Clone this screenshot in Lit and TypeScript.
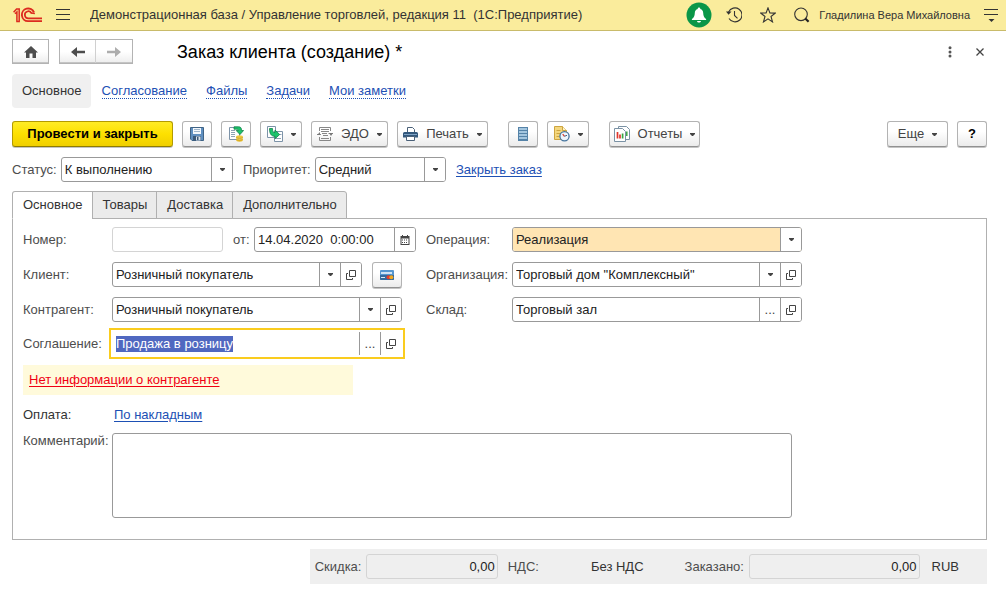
import { LitElement, html, svg, css, nothing, TemplateResult, SVGTemplateResult } from "lit";
import { customElement, property, query } from "lit/decorators.js";
import { classMap } from "lit/directives/class-map.js";

/* ---------- icons ---------- */

interface Icon {
  w: number;
  h: number;
  body: SVGTemplateResult;
}

const icons: Record<string, Icon> = {
  logo: {
    w: 30,
    h: 16,
    body: svg`<g fill="none" stroke="#dc2a1f">
      <path stroke-width="1.5" d="M0.6 5.200 3.600 1.900H6.200V14.600M2 6.800 3.900 5V14.600M3.200 14.400H6.900"/>
      <path stroke-width="1.900" d="M21 5.400A6.300 6.300 0 1 0 15 14.100H29"/>
      <path stroke-width="1.700" d="M18.500 6.300A3.500 3.500 0 1 0 15.300 11.300H29"/>
      <path stroke-width="1.500" d="M18 6 21.900 6.500"/>
    </g>`,
  },
  burger: {
    w: 14,
    h: 12,
    body: svg`<path stroke="#333" d="M0 0.5H14M0 5.5H14M0 10.5H14"/>`,
  },
  bell: {
    w: 26,
    h: 26,
    body: svg`<circle cx="13" cy="13" r="12.5" fill="#0a9648"/>
      <path fill="#fff" d="M13 5.6c.8 0 1.3.6 1.3 1.3 1.9.6 2.8 2 2.9 4 .1 2.700.9 4.600 2.900 6.100v1H5.900v-1c2-1.500 2.800-3.400 2.900-6.100.1-2 1-3.400 2.900-4 0-.7.5-1.300 1.300-1.300zM11 19h4c-.2 1-1 1.500-2 1.500s-1.800-.5-2-1.500z"/>`,
  },
  history: {
    w: 16,
    h: 16,
    body: svg`<g fill="none" stroke="#333" stroke-width="1.1"><path d="M2.600 5A7 7 0 1 1 3 11.500M8.500 4v4.500l3 2.800"/></g>
      <path fill="#333" d="M0 4.500h5.500L2.600 7.800z"/>`,
  },
  star: {
    w: 16,
    h: 16,
    body: svg`<path fill="none" stroke="#333" stroke-width="1.1" d="M8 .9 9.900 5.900 15.200 6.100 11 9.500 12.500 14.900 8 11.800 3.500 14.900 5 9.500.8 6.100 6.100 5.900z"/>`,
  },
  search: {
    w: 16,
    h: 16,
    body: svg`<circle cx="7" cy="7.300" r="6.300" fill="none" stroke="#333" stroke-width="1.1"/><path stroke="#222" stroke-width="2.200" d="M11.300 11.500 14.600 14.700"/>`,
  },
  service: {
    w: 14,
    h: 14,
    body: svg`<path stroke="#333" d="M0 1.500H14M0 6.500H14"/><path fill="#333" d="M4.500 11h6l-3 3z"/>`,
  },
  home: {
    w: 14,
    h: 12,
    body: svg`<path fill="#4d4d4d" d="M7 0 14 6.500H12V12H8.500V7.500H5.500V12H2V6.500H0z"/>`,
  },
  back: {
    w: 14,
    h: 12,
    body: svg`<path fill="#4d4d4d" d="M0 6 6 1V4.700H14V7.300H6V11z"/>`,
  },
  forward: {
    w: 14,
    h: 12,
    body: svg`<path fill="#adadad" d="M14 6 8 1V4.700H0V7.300H8V11z"/>`,
  },
  dots: {
    w: 4,
    h: 12,
    body: svg`<g fill="#555"><circle cx="2" cy="1.700" r="1.500"/><circle cx="2" cy="5.900" r="1.500"/><circle cx="2" cy="10.100" r="1.500"/></g>`,
  },
  close: {
    w: 8,
    h: 8,
    body: svg`<path stroke="#444" stroke-width="1.300" d="M.5.5 7.500 7.500M7.500.5.5 7.500"/>`,
  },
  arrow: {
    w: 5,
    h: 3,
    body: svg`<path fill="#444" d="M0 0H5V1L3 3H2L0 1z"/>`,
  },
  save: {
    w: 14,
    h: 14,
    body: svg`<path fill="#5f8fc0" stroke="#3f6385" d="M.5.5H13.500V13.500H2L.5 12z"/>
      <path fill="#f4f8fc" d="M3 1h8v6H3z"/><path stroke="#9fb6cc" d="M4 2.500h6M4 4.500h6"/>
      <path fill="#3a5878" d="M3 9h8v4.500H3z"/><path fill="#d9e3ec" d="M6 9.500h4.500v4H6z"/><path fill="#3a5878" d="M7 10h1.500v3H7z"/>`,
  },
  post: {
    w: 16,
    h: 16,
    body: svg`<path fill="#fff" stroke="#7d93a8" d="M1.500 1.500H11.500V13.500H1.500z"/><path stroke="#8ea3b5" d="M3 4.500h4M3 6.500h4M3 8.500h4M3 10.500h4"/>
      <path fill="#1cc36b" stroke="#12804a" stroke-width=".8" d="M6 .8h4.500C12.800.8 13.500 2 13.500 4.500H15.600L12 8.500 8.200 4.500H10.500C10.500 3.300 10 3.200 6 3.200z"/>
      <ellipse cx="11.500" cy="14" rx="3.400" ry="1.700" fill="#e9bd2c"/><ellipse cx="11.500" cy="12.300" rx="3.400" ry="1.600" fill="#f3d765"/><ellipse cx="11.500" cy="10.700" rx="3.400" ry="1.500" fill="#eec63d"/>
      <path stroke="#b98f1a" stroke-width=".6" fill="none" d="M8.100 11.300c1.500 1.500 5.300 1.500 6.800 0M8.100 13c1.500 1.500 5.300 1.500 6.800 0"/>`,
  },
  basis: {
    w: 16,
    h: 16,
    body: svg`<path fill="#fff" stroke="#7d93a8" d="M.5.500H8.500V11.500H.500z"/><path fill="#fff" stroke="#7d93a8" d="M7.500 5.500H15.500V15.500H7.500z"/><path stroke="#8ea3b5" d="M9 12.500h5M12.500 8.500h2"/>
      <path fill="#1cc36b" stroke="#12804a" stroke-width=".8" d="M2.500 2.500H5.500C5.500 5.500 6 6.500 8 6.500V4L12.700 8.500 8 12.800V10.300C4 10.300 2.500 7.500 2.500 2.500z"/>`,
  },
  edo: {
    w: 16,
    h: 14,
    body: svg`<g fill="none" stroke="#888"><path d="M2.500 4V.500H13.500V4M2.500 10V13.500H13.500V10"/><path d="M4 2.500h8M4 4.500h8M5 6.500h5M6 8.500h5M4 11.500h8"/><path d="M0 7.500H4M11.500 6.500H16"/></g>
      <path fill="#777" d="M0 8 3 5V8zM16 6H12L14 9z"/>`,
  },
  print: {
    w: 15,
    h: 14,
    body: svg`<path fill="#fff" stroke="#4a6078" d="M4.500.500h5l2 2V5.500h-7z"/><path fill="#33587c" d="M1.500 5h12A1.500 1.500 0 0 1 15 6.500V10.500H0V6.500A1.500 1.500 0 0 1 1.500 5z"/>
      <path stroke="#7fa3c4" d="M1 7.500H14"/><path fill="#fff" stroke="#4a6078" d="M3.500 9.500h8v4h-8z"/>`,
  },
  list: {
    w: 10,
    h: 14,
    body: svg`<path fill="#5583a8" d="M0 0H10V14H0z"/><path stroke="#a4c6df" stroke-width="2" d="M1 2H9M1 5H9M1 8H9M1 11H9"/>`,
  },
  note: {
    w: 16,
    h: 16,
    body: svg`<path fill="#f4d77e" stroke="#cda440" d="M.500.500H8.500L12.500 4.500V13.500H.500z"/><path fill="#fff3c8" stroke="#cda440" d="M8.500.500V4.500H12.500"/><path stroke="#cda440" d="M2.500 4.500h4M2.500 7.500h5M2.500 10.500h3"/>
      <circle cx="10.500" cy="10.300" r="4.600" fill="#eef5fc" stroke="#46759e" stroke-width="1.300"/><path fill="none" stroke="#d8402f" stroke-width="1.300" d="M10.500 10.300 8.700 8.200"/><path fill="none" stroke="#3d607f" d="M10.500 10.300 13 9.300"/>`,
  },
  report: {
    w: 16,
    h: 16,
    body: svg`<path fill="#fff" stroke="#7b92a5" d="M4.500.500H12.500L15.500 3.500V13.500H4.500z"/><path stroke="#3ba544" stroke-width="1.500" d="M12.800 5.500V10"/>
      <path fill="#fff" stroke="#7b92a5" d="M.500 2.500H8.500L11.500 5.500V15.500H.500z"/><path stroke="#e0352b" stroke-width="1.700" d="M3.500 6V12.500M6 8.500V12.500"/><path stroke="#3ba544" stroke-width="1.700" d="M8.600 7.500V12.500"/>`,
  },
  calendar: {
    w: 10,
    h: 10,
    body: svg`<path fill="#444" d="M2 0h1v1H7V0h1v1h1.500v9h-9V1H2z"/><path fill="#fff" d="M1.500 3.500h7V9h-7z"/><path stroke="#444" stroke-dasharray="1 1" d="M2 5H8M2 7.500H8"/>`,
  },
  open: {
    w: 10,
    h: 10,
    body: svg`<path fill="none" stroke="#444" d="M3.500.500H9.500V6.500H3.500zM2 3.500H.500V9.500H6.500V8"/>`,
  },
  card: {
    w: 14,
    h: 10,
    body: svg`<rect width="14" height="10" rx="1" fill="#5596cf"/><path fill="#cfe3f3" d="M1 2h11v2H1z"/><path fill="#356a9c" d="M0 5h14v4a1 1 0 0 1-1 1H1A1 1 0 0 1 0 9z"/><path stroke="#dce9f4" d="M1 7.500h4"/><circle cx="8.500" cy="7.300" r="2" fill="#e43d2c"/><circle cx="11.300" cy="7.300" r="2" fill="#f2a71f"/>`,
  },
};

const icon = (name: string): TemplateResult => {
  const i = icons[name];
  return html`<svg width=${i.w} height=${i.h} viewBox="0 0 ${i.w} ${i.h}" aria-hidden="true">${i.body}</svg>`;
};

const base = css`
  * {
    box-sizing: border-box;
  }
  svg {
    display: block;
    flex: none;
  }
  button,
  input,
  select,
  textarea {
    font: inherit;
    color: inherit;
    margin: 0;
    padding: 0;
    border: 0;
    background: none;
    outline: none;
    appearance: none;
    min-width: 0;
  }
  button {
    cursor: pointer;
  }
`;

/* ---------- command bar button ---------- */

@customElement("cmd-button")
class CmdButton extends LitElement {
  static styles = [
    base,
    css`
      :host {
        display: block;
        flex: none;
      }
      .btn {
        display: flex;
        align-items: center;
        justify-content: center;
        gap: 8px;
        width: 100%;
        height: 26px;
        padding: 0 7px;
        border: 1px solid #b3b3b3;
        border-bottom-color: #919191;
        border-radius: 3px;
        background: linear-gradient(#fff 40%, #ebebeb);
        box-shadow: 0 1px 0 #c4c4c4;
        color: #444;
        white-space: nowrap;
      }
      .main {
        border-color: #b39b00 #b39b00 #8f7c00;
        background: linear-gradient(#ffec26, #fde000 50%, #f0cf00);
        color: #000;
        font-weight: bold;
      }
      .dark {
        color: #000;
        font-weight: bold;
      }
    `,
  ];
  @property() icon = "";
  @property() text = "";
  @property() hint = "";
  @property() kind = "";
  @property({ type: Boolean }) menu = false;

  render() {
    return html`<button
      class=${classMap({ btn: true, main: this.kind === "main", dark: this.kind === "dark" })}
      aria-label=${this.text || this.hint}
    >
      ${this.icon ? icon(this.icon) : nothing}${this.text ? html`<span>${this.text}</span>` : nothing}${this.menu
        ? icon("arrow")
        : nothing}
    </button>`;
  }
}

/* ---------- input with side buttons ---------- */

@customElement("form-field")
class FormField extends LitElement {
  static styles = [
    base,
    css`
      :host {
        display: block;
        min-width: 0;
        color: #222;
      }
      .line {
        display: flex;
        align-items: center;
      }
      .label {
        flex: none;
        width: var(--label, auto);
        margin-right: var(--label-gap, 0);
        color: #4d4d4d;
        white-space: nowrap;
      }
      .box {
        display: flex;
        flex: 1;
        min-width: 0;
        height: 25px;
        border: 1px solid #999;
        border-radius: 3px;
        background: #fff;
        overflow: hidden;
      }
      .pale {
        border-color: #d4d4d4;
        background: transparent;
      }
      .marked .value {
        background: #ffe5b3;
      }
      .active {
        border-color: #fff;
        border-radius: 0;
        outline: 2px solid #facc1e;
        outline-offset: 1px;
      }
      .value {
        flex: 1;
        width: 0;
        padding: 0 3px;
      }
      .value::selection {
        background: #5068c0;
        color: #fff;
      }
      .number {
        text-align: right;
        padding: 0 2px;
      }
      .pick {
        display: grid;
        flex: 1;
        min-width: 0;
        grid-template-columns: 1fr 21px;
      }
      .pick .value {
        grid-area: 1 / 1 / 2 / 3;
        width: 100%;
      }
      .side {
        display: flex;
        flex: none;
        align-items: center;
        justify-content: center;
        width: 21px;
        border-left: 1px solid #999;
        background: #fff;
        color: #444;
      }
      .pick .side {
        grid-area: 1 / 2;
        pointer-events: none;
      }
    `,
  ];
  @property() label = "";
  @property() value = "";
  @property() kind = "";
  @property() pick = "";
  @property({ type: Boolean }) open = false;
  @query("input") input?: HTMLInputElement;

  firstUpdated() {
    if (this.kind === "active") {
      this.input?.focus();
      this.input?.select();
    }
  }

  private control() {
    if (this.pick === "list") {
      return html`<div class="pick">
        <select class="value" id="f">
          <option>${this.value}</option>
        </select>
        <span class="side">${icon("arrow")}</span>
      </div>`;
    }
    return html`<input
        id="f"
        class=${classMap({ value: true, number: this.kind === "total" })}
        .value=${this.value}
        ?readonly=${this.kind === "total"}
      />${this.pick === "date"
        ? html`<button class="side" aria-label="Выбрать дату">${icon("calendar")}</button>`
        : this.pick === "more"
          ? html`<button class="side" aria-label="Выбрать">...</button>`
          : nothing}`;
  }

  render() {
    return html`<div class="line">
      <label class="label" for="f">${this.label}</label>
      <div
        class=${classMap({
          box: true,
          pale: this.kind === "total" || this.kind === "pale",
          marked: this.kind === "marked",
          active: this.kind === "active",
        })}
      >
        ${this.control()}
        ${this.open ? html`<button class="side" aria-label="Открыть">${icon("open")}</button>` : nothing}
      </div>
    </div>`;
  }
}

/* ---------- page ---------- */

@customElement("app-root")
class AppRoot extends LitElement {
  static styles = [
    base,
    css`
      :host {
        display: block;
        font: 13px/16px "Liberation Sans", Arial, sans-serif;
        color: #333;
        background: #fff;
      }
      a {
        color: #1d50b4;
        text-underline-offset: 2px;
      }
      .top {
        display: flex;
        align-items: center;
        height: 31px;
        padding: 0 8px 0 13px;
        background: #faec9c;
        border-bottom: 1px solid #c9bb6a;
      }
      .burger {
        margin: 0 20px 0 13px;
      }
      .base {
        flex: 1;
        min-width: 0;
        overflow: hidden;
        white-space: pre;
      }
      .tools {
        display: flex;
        align-items: center;
        gap: 18px;
        margin-right: 9px;
      }
      .bell {
        margin-right: -4px;
      }
      .user {
        margin-right: 14px;
        font-size: 11px;
        white-space: nowrap;
      }
      .page {
        padding: 8px 19px 9px 12px;
      }
      .head {
        display: flex;
        align-items: center;
      }
      .nav {
        display: flex;
        height: 25px;
        margin-right: 10px;
        border: 1px solid #b3b3b3;
        background: linear-gradient(#fff 50%, #ededed);
        box-shadow: inset 0 -1px 0 #c4c4c4;
      }
      .nav button {
        display: flex;
        align-items: center;
        justify-content: center;
        width: 35px;
      }
      .nav button + button {
        width: 37px;
        border-left: 1px solid #d0d0d0;
      }
      .title {
        flex: 1;
        margin: 0 0 0 34px;
        font-size: 18px;
        line-height: 22px;
        font-weight: normal;
        color: #000;
      }
      .window {
        display: flex;
        align-items: center;
        gap: 24px;
        padding-right: 3px;
      }
      .sections {
        display: flex;
        align-items: center;
        gap: 19px;
        margin: 10px 0 13px;
      }
      .section {
        text-decoration: none;
        border-bottom: 1px dotted #1d50b4;
        line-height: 15px;
      }
      .current {
        margin-right: -8px;
        padding: 9px 9px 9px 10px;
        border: 0;
        border-radius: 4px;
        background: #f0f0f0;
        color: #333;
        line-height: 16px;
      }
      .bar {
        display: flex;
        gap: 9px;
      }
      .push {
        margin-left: auto;
      }
      .apart {
        margin-left: 11px;
      }
      .w-main { width: 161px; }
      .w-s { width: 30px; }
      .w-m { width: 42px; }
      .w-edo { width: 77px; }
      .w-print { width: 91px; }
      .w-more { width: 61px; }
      .state {
        display: flex;
        align-items: center;
        gap: 10px;
        margin: 10px 0 9px;
        --label-gap: 4px;
      }
      .status { width: 221px; }
      .priority { width: 203px; }
      .tabs {
        display: flex;
        position: relative;
        margin-bottom: -1px;
      }
      .tab {
        height: 28px;
        padding: 0 9px 0 10px;
        margin-right: -1px;
        border: 1px solid #b0b0b0;
        background: #ebebeb;
        white-space: nowrap;
      }
      .tab:first-child {
        border-top-left-radius: 3px;
      }
      .tab:last-child {
        border-top-right-radius: 3px;
      }
      .on {
        background: #fff;
        border-bottom-color: #fff;
      }
      .panel {
        padding: 8px 10px 21px;
        border: 1px solid #b0b0b0;
      }
      .form {
        display: flex;
        gap: 10px;
      }
      .left,
      .right {
        display: flex;
        flex-direction: column;
        gap: 10px;
      }
      .left {
        flex: 0 1 393px;
        --label: 89px;
      }
      .right {
        flex: 0 1 376px;
        --label: 86px;
      }
      .row {
        display: flex;
        height: 25px;
      }
      .number {
        width: 200px;
        margin-right: 10px;
      }
      .date {
        flex: 1;
        --label: 21px;
      }
      .client {
        flex: 0 1 339px;
        margin-right: 10px;
      }
      .narrow {
        margin-right: 14px;
      }
      .agreement {
        margin: 9px 0;
        max-width: 379px;
        --label: 89px;
      }
      .warning {
        width: 330px;
        padding: 7px 6px;
        background: #fffadb;
      }
      .warning a {
        color: #f00014;
      }
      .payment {
        display: flex;
        margin: 12px 0 10px;
      }
      .payment span {
        width: 91px;
      }
      .comment {
        display: flex;
        max-width: 769px;
        color: #4d4d4d;
      }
      .comment label {
        flex: none;
        width: 89px;
      }
      .comment textarea {
        flex: 1;
        height: 85px;
        padding: 4px;
        border: 1px solid #999;
        border-radius: 3px;
        resize: none;
      }
      .totals {
        display: flex;
        align-items: center;
        width: fit-content;
        height: 35px;
        margin: 9px 0 0 auto;
        padding: 0 28px 0 5px;
        background: #efefef;
        --label-gap: 5px;
      }
      .discount { width: 183px; }
      .vat {
        margin: 0 52px 0 10px;
        color: #4d4d4d;
      }
      .ordered {
        width: 235px;
        margin: 0 12px 0 41px;
      }
    `,
  ];

  render() {
    return html`
      <header class="top">
        ${icon("logo")}
        <button class="burger" aria-label="Меню">${icon("burger")}</button>
        <span class="base">Демонстрационная база / Управление торговлей, редакция 11  (1С:Предприятие)</span>
        <div class="tools">
          <button class="bell" aria-label="Оповещения">${icon("bell")}</button>
          <button aria-label="История">${icon("history")}</button>
          <button aria-label="Избранное">${icon("star")}</button>
          <button aria-label="Поиск">${icon("search")}</button>
        </div>
        <span class="user">Гладилина Вера Михайловна</span>
        <button aria-label="Сервис">${icon("service")}</button>
      </header>
      <main class="page">
        <div class="head">
          <div class="nav"><button aria-label="Домой">${icon("home")}</button></div>
          <div class="nav">
            <button aria-label="Назад">${icon("back")}</button>
            <button aria-label="Вперед">${icon("forward")}</button>
          </div>
          <h1 class="title">Заказ клиента (создание) *</h1>
          <div class="window">
            <button aria-label="Еще действия">${icon("dots")}</button>
            <button aria-label="Закрыть">${icon("close")}</button>
          </div>
        </div>
        <nav class="sections">
          <a class="section current" href="#main">Основное</a>
          ${["Согласование", "Файлы", "Задачи", "Мои заметки"].map(
            (t) => html`<a class="section" href="#section">${t}</a>`,
          )}
        </nav>
        <div class="bar">
          <cmd-button class="w-main" kind="main" text="Провести и закрыть"></cmd-button>
          <cmd-button class="w-s" icon="save" hint="Записать"></cmd-button>
          <cmd-button class="w-s" icon="post" hint="Провести"></cmd-button>
          <cmd-button class="w-m" icon="basis" menu hint="Создать на основании"></cmd-button>
          <cmd-button class="w-edo" icon="edo" text="ЭДО" menu></cmd-button>
          <cmd-button class="w-print" icon="print" text="Печать" menu></cmd-button>
          <cmd-button class="w-s apart" icon="list" hint="Список"></cmd-button>
          <cmd-button class="w-m" icon="note" menu hint="Напоминание"></cmd-button>
          <cmd-button class="w-print apart" icon="report" text="Отчеты" menu></cmd-button>
          <cmd-button class="w-more push" text="Еще" menu></cmd-button>
          <cmd-button class="w-s" kind="dark" text="?"></cmd-button>
        </div>
        <div class="state">
          <form-field class="status" label="Статус:" value="К выполнению" pick="list"></form-field>
          <form-field class="priority" label="Приоритет:" value="Средний" pick="list"></form-field>
          <a href="#close">Закрыть заказ</a>
        </div>
        <div class="tabs" role="tablist">
          ${["Основное", "Товары", "Доставка", "Дополнительно"].map(
            (t, i) => html`<button role="tab" aria-selected=${i === 0} class=${classMap({ tab: true, on: i === 0 })}>${t}</button>`,
          )}
        </div>
        <section class="panel">
          <div class="form">
            <div class="left">
              <div class="row">
                <form-field class="number" label="Номер:" kind="pale"></form-field>
                <form-field class="date" label="от:" value="14.04.2020  0:00:00" pick="date"></form-field>
              </div>
              <div class="row">
                <form-field class="client" label="Клиент:" value="Розничный покупатель" pick="list" open></form-field>
                <cmd-button class="w-s" icon="card" hint="Карта лояльности"></cmd-button>
              </div>
              <form-field class="narrow" label="Контрагент:" value="Розничный покупатель" pick="list" open></form-field>
            </div>
            <div class="right">
              <form-field label="Операция:" value="Реализация" kind="marked" pick="list"></form-field>
              <form-field label="Организация:" value='Торговый дом "Комплексный"' pick="list" open></form-field>
              <form-field label="Склад:" value="Торговый зал" pick="more" open></form-field>
            </div>
          </div>
          <form-field class="agreement" label="Соглашение:" value="Продажа в розницу" kind="active" pick="more" open></form-field>
          <div class="warning"><a href="#info">Нет информации о контрагенте</a></div>
          <div class="payment"><span>Оплата:</span><a href="#payment">По накладным</a></div>
          <div class="comment">
            <label for="comment">Комментарий:</label>
            <textarea id="comment"></textarea>
          </div>
        </section>
        <footer class="totals">
          <form-field class="discount" label="Скидка:" value="0,00" kind="total"></form-field>
          <span class="vat">НДС:</span>
          <span>Без НДС</span>
          <form-field class="ordered" label="Заказано:" value="0,00" kind="total"></form-field>
          <span>RUB</span>
        </footer>
      </main>
    `;
  }
}
